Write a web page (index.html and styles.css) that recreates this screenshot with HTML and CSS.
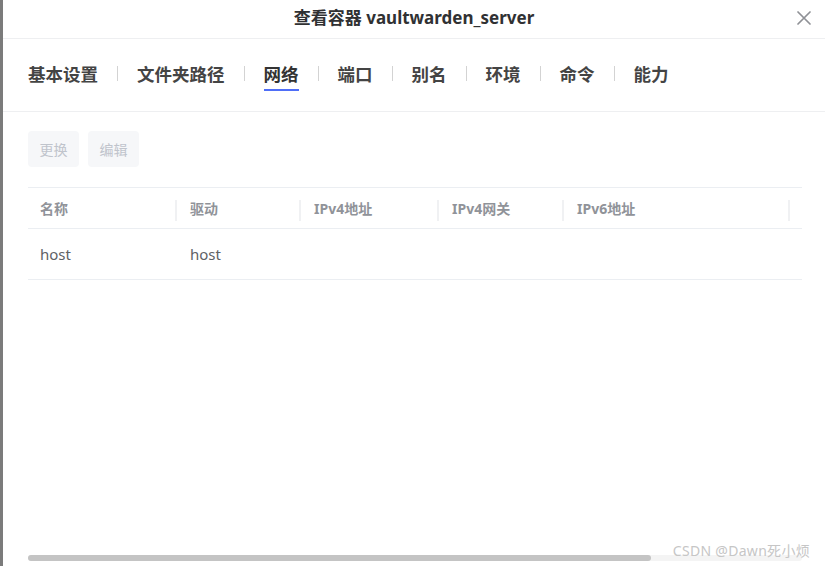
FILE: index.html
```html
<!DOCTYPE html>
<html lang="zh-CN">
<head>
    <meta charset="UTF-8">
    <title>查看容器 vaultwarden_server</title>
    <link rel="stylesheet" href="styles.css">
</head>
<body>
    <div class="dialog">
        <div class="dialog-header">
            <div class="dialog-title">查看容器 vaultwarden_server</div>
            <button class="close-btn" aria-label="关闭">
                <svg width="14" height="14" viewBox="0 0 14 14">
                    <path d="M1 1 L13 13 M13 1 L1 13" stroke="#8f9196" stroke-width="1.7" stroke-linecap="round" fill="none"/>
                </svg>
            </button>
        </div>

        <div class="tabs">
            <div class="tab">基本设置</div>
            <span class="tab-sep"></span>
            <div class="tab">文件夹路径</div>
            <span class="tab-sep"></span>
            <div class="tab active">网络</div>
            <span class="tab-sep"></span>
            <div class="tab">端口</div>
            <span class="tab-sep"></span>
            <div class="tab">别名</div>
            <span class="tab-sep"></span>
            <div class="tab">环境</div>
            <span class="tab-sep"></span>
            <div class="tab">命令</div>
            <span class="tab-sep"></span>
            <div class="tab">能力</div>
        </div>

        <div class="dialog-body">
            <div class="toolbar">
                <button class="btn" disabled>更换</button>
                <button class="btn" disabled>编辑</button>
            </div>

            <table class="net-table">
                <colgroup>
                    <col style="width: 149px">
                    <col style="width: 124px">
                    <col style="width: 138px">
                    <col style="width: 125px">
                    <col style="width: 226px">
                    <col style="width: 200px">
                </colgroup>
                <thead>
                    <tr>
                        <th>名称</th>
                        <th>驱动</th>
                        <th>IPv4地址</th>
                        <th>IPv4网关</th>
                        <th>IPv6地址</th>
                        <th></th>
                    </tr>
                </thead>
                <tbody>
                    <tr>
                        <td>host</td>
                        <td>host</td>
                        <td></td>
                        <td></td>
                        <td></td>
                        <td></td>
                    </tr>
                </tbody>
            </table>
        </div>

        <!-- horizontal scrollbar of the table area -->
        <div class="hscroll">
            <div class="hscroll-thumb" style="width: 80.5%"></div>
        </div>

        <div class="watermark">CSDN @Dawn死小烦</div>
    </div>
</body>
</html>
```

FILE: styles.css
```css
* {
    box-sizing: border-box;
}

body {
    margin: 0;
    font-family: "Noto Sans", "Noto Sans CJK SC", sans-serif;
    background: #fff;
    border-left: 3px solid #7b7b7b;
    height: 566px;
    overflow: hidden;
}

.dialog {
    position: relative;
    height: 566px;
    background: #fff;
}

.dialog-header {
    position: relative;
    height: 39px;
    display: flex;
    align-items: center;
    justify-content: center;
    padding-bottom: 5px;
    border-bottom: 1px solid #eeeff1;
}

.dialog-title {
    font-size: 17px;
    font-weight: bold;
    color: #303133;
}

.close-btn {
    position: absolute;
    right: 13px;
    top: 10px;
    width: 16px;
    height: 16px;
    padding: 1px;
    border: none;
    background: none;
    cursor: pointer;
}

.tabs {
    display: flex;
    align-items: flex-start;
    height: 73px;
    padding: 22px 0 0 25px;
    border-bottom: 1px solid #eeeff1;
}

.tab {
    font-size: 17.5px;
    font-weight: bold;
    line-height: 26px;
    color: #444;
    padding-bottom: 2px;
    border-bottom: 2px solid transparent;
    cursor: pointer;
}

.tab.active {
    color: #333;
    border-bottom-color: #4f6ef7;
}

.tab-sep {
    width: 1px;
    height: 15px;
    margin: 5px 19px 0;
    background: #d3d3d3;
}

.dialog-body {
    margin: 0 23px 0 25px;
    height: 443px;
    overflow: hidden;
}

.toolbar {
    display: flex;
    gap: 9px;
    padding-top: 19px;
    margin-bottom: 20px;
}

.btn {
    width: 51px;
    height: 36px;
    border: none;
    border-radius: 4px;
    background: #f6f7f9;
    color: #c0c4cc;
    font-family: inherit;
    font-size: 14px;
    padding: 0;
}

.net-table {
    width: 962px;
    table-layout: fixed;
    border-collapse: collapse;
    border-top: 1px solid #ebeef2;
}

.net-table th,
.net-table td {
    text-align: left;
    padding: 0 13px;
    border-bottom: 1px solid #ebeef2;
    white-space: nowrap;
}

.net-table th {
    position: relative;
    height: 41px;
    font-size: 14px;
    font-weight: bold;
    color: #909399;
}

.net-table th:first-child,
.net-table td:first-child {
    padding-left: 12px;
}

.net-table th::after {
    content: "";
    position: absolute;
    right: 0;
    top: 12px;
    width: 2px;
    height: 21px;
    background: #f0f1f3;
}

.net-table td {
    height: 51px;
    font-size: 15px;
    color: #606266;
}

.hscroll {
    margin: 0 23px 0 25px;
    height: 6px;
    border-radius: 3px;
    background: #f4f4f4;
}

.hscroll-thumb {
    height: 6px;
    border-radius: 3px;
    background: #c4c4c4;
}

.watermark {
    position: absolute;
    right: 15px;
    bottom: 6px;
    font-size: 14px;
    color: #c6c6c6;
    letter-spacing: 0.3px;
}
```
